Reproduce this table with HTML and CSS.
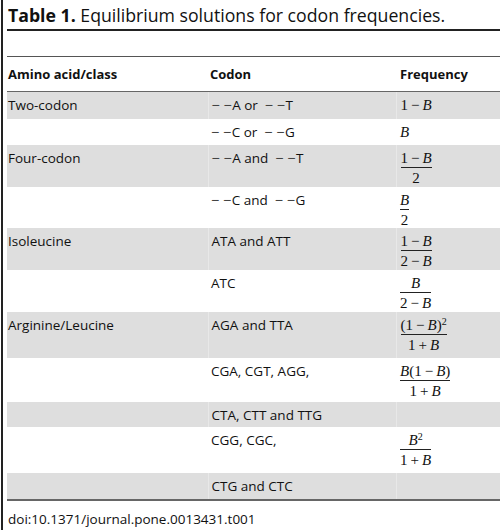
FILE: index.html
```html
<!DOCTYPE html>
<html>
<head>
<meta charset="utf-8">
<link rel="stylesheet" href="styles.css">
</head>
<body>
<div class="page">
  <h1 class="title"><b>Table 1.</b> Equilibrium solutions for codon frequencies.</h1>
  <div class="rule-thick"></div>
  <div class="spacer"></div>
  <table class="tbl">
    <thead>
      <tr class="head">
        <th class="c1">Amino acid/class</th>
        <th class="c2">Codon</th>
        <th class="c3">Frequency</th>
      </tr>
    </thead>
    <tbody>
      <tr class="g h-s1">
        <td class="c1">Two-codon</td>
        <td class="c2"><span class="d">−&#8201;−</span>A or&nbsp; <span class="d">−&#8201;−</span>T</td>
        <td class="c3"><span class="m">1&#8201;−&#8201;<i>B</i></span></td>
      </tr>
      <tr class="w h-s">
        <td class="c1"></td>
        <td class="c2"><span class="d">−&#8201;−</span>C or&nbsp; <span class="d">−&#8201;−</span>G</td>
        <td class="c3"><span class="m"><i>B</i></span></td>
      </tr>
      <tr class="g h-m1">
        <td class="c1">Four-codon</td>
        <td class="c2"><span class="d">−&#8201;−</span>A and&nbsp; <span class="d">−&#8201;−</span>T</td>
        <td class="c3"><span class="frac"><span class="num">1&#8201;−&#8201;<i>B</i></span><span class="den">2</span></span></td>
      </tr>
      <tr class="w h-m">
        <td class="c1"></td>
        <td class="c2"><span class="d">−&#8201;−</span>C and&nbsp; <span class="d">−&#8201;−</span>G</td>
        <td class="c3"><span class="frac"><span class="num"><i>B</i></span><span class="den">2</span></span></td>
      </tr>
      <tr class="g h-m1">
        <td class="c1">Isoleucine</td>
        <td class="c2">ATA and ATT</td>
        <td class="c3"><span class="frac"><span class="num">1&#8201;−&#8201;<i>B</i></span><span class="den">2&#8201;−&#8201;<i>B</i></span></span></td>
      </tr>
      <tr class="w h-m1">
        <td class="c1"></td>
        <td class="c2">ATC</td>
        <td class="c3"><span class="frac"><span class="num"><i>B</i></span><span class="den">2&#8201;−&#8201;<i>B</i></span></span></td>
      </tr>
      <tr class="g h-l">
        <td class="c1">Arginine/Leucine</td>
        <td class="c2">AGA and TTA</td>
        <td class="c3"><span class="frac"><span class="num">(1&#8201;−&#8201;<i>B</i>)<sup>2</sup></span><span class="den">1&#8201;+&#8201;<i>B</i></span></span></td>
      </tr>
      <tr class="w h-l2">
        <td class="c1"></td>
        <td class="c2">CGA, CGT, AGG,</td>
        <td class="c3"><span class="frac"><span class="num"><i>B</i>(1&#8201;−&#8201;<i>B</i>)</span><span class="den">1&#8201;+&#8201;<i>B</i></span></span></td>
      </tr>
      <tr class="g h-xs">
        <td class="c1"></td>
        <td class="c2">CTA, CTT and TTG</td>
        <td class="c3"></td>
      </tr>
      <tr class="w h-l">
        <td class="c1"></td>
        <td class="c2">CGG, CGC,</td>
        <td class="c3"><span class="frac"><span class="num"><i>B</i><sup>2</sup></span><span class="den">1&#8201;+&#8201;<i>B</i></span></span></td>
      </tr>
      <tr class="g h-s last">
        <td class="c1"></td>
        <td class="c2">CTG and CTC</td>
        <td class="c3"></td>
      </tr>
    </tbody>
  </table>
  <div class="doi">doi:10.1371/journal.pone.0013431.t001</div>
</div>
</body>
</html>
```
FILE: styles.css
```css
html, body {
  margin: 0;
  padding: 0;
  background: #fff;
}
.page {
  margin-left: 1px;
  border-left: 2px solid #222;
  padding-left: 4px;
  height: 530px;
  box-sizing: border-box;
  font-family: "Open Sans", "Noto Sans", sans-serif;
  color: #111;
}
.title {
  margin: 0;
  padding: 3px 0 0 1px;
  font-size: 17.7px;
  font-weight: 400;
  line-height: 24px;
  height: 26px;
  white-space: nowrap;
}
.title b {
  font-weight: 700;
}
.rule-thick {
  height: 2px;
  background: #222;
}
.spacer {
  height: 25px;
  border-bottom: 1px solid #555;
}
.tbl {
  width: 493px;
  border-collapse: collapse;
  table-layout: fixed;
  font-size: 13.5px;
}
.tbl th, .tbl td {
  padding-right: 0;
}
.tbl .c1 { width: 200px; padding-left: 1px; }
.tbl .c2 { width: 186px; padding-left: 3px; }
.tbl .c3 { padding-left: 4px; }
.head th {
  height: 34px;
  text-align: left;
  font-weight: 700;
  font-size: 13px;
  vertical-align: middle;
  border-bottom: 1px solid #666;
  padding-top: 0;
  padding-bottom: 0;
}
.head th.c2 { padding-left: 2px; }
.tbl td {
  vertical-align: top;
  padding-top: 5px;
  padding-bottom: 0;
  line-height: 17px;
  white-space: nowrap;
}
.d {
  font-family: "Liberation Sans", Arial, sans-serif;
  font-size: 14px;
  color: #444;
  letter-spacing: 0.5px;
}
.g td { background: #dedede; }
.g td + td { border-left: 1px solid #e8e8e8; }
.h-xs td { height: 20px; }
.h-s td { height: 21px; }
.h-s1 td { height: 22px; }
.h-m td { height: 36px; }
.h-m1 td { height: 37px; }
.h-l td { height: 41px; }
.h-l2 td { height: 39px; }
.last td { border-bottom: 2px solid #666; }
.m {
  font-family: "Liberation Serif", "Times New Roman", serif;
  font-size: 15px;
}
.frac {
  display: inline-flex;
  flex-direction: column;
  align-items: center;
  font-family: "Liberation Serif", "Times New Roman", serif;
  font-size: 15px;
  line-height: 14px;
  margin-top: 1px;
}
.num {
  padding: 0 0 2px;
  white-space: nowrap;
}
.den {
  align-self: stretch;
  text-align: center;
  border-top: 1px solid #222;
  padding-top: 3px;
  white-space: nowrap;
}
sup {
  font-size: 10px;
  line-height: 0;
  vertical-align: 5px;
}
.doi {
  margin-top: 10px;
  font-size: 13.5px;
  line-height: 17px;
  padding-left: 1px;
}
```
